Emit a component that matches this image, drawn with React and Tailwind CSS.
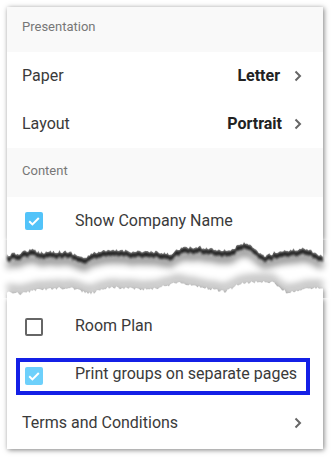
import React from "react";

const FONT = { fontFamily: "Roboto, 'Liberation Sans', sans-serif" };

function rng(seed) {
  let s = seed;
  return () => {
    s = (s * 16807) % 2147483647;
    return (s - 1) / 2147483646;
  };
}

function jag(base, seed, amp) {
  const r = rng(seed);
  const pts = [];
  for (let x = 7; x <= 323; x += 1.5) {
    let i = 0;
    while (i < base.length - 2 && base[i + 1][0] < x) i++;
    const [x0, y0] = base[i];
    const [x1, y1] = base[i + 1];
    let t = (x - x0) / (x1 - x0);
    t = Math.max(0, Math.min(1, t));
    const y = y0 + (y1 - y0) * t + (r() - 0.5) * amp;
    pts.push([x, +y.toFixed(2)]);
  }
  pts[pts.length - 1][0] = 323;
  return pts;
}

const topBase = [
  [7, 15], [20, 13], [27, 10], [33, 10], [40, 12], [55, 11], [70, 12], [85, 18], [95, 12],
  [120, 10], [135, 11], [155, 12], [170, 14], [180, 8], [200, 7], [215, 9], [230, 10],
  [246, 2], [255, 10], [265, 16], [275, 12], [290, 10], [305, 8], [315, 12], [323, 17],
];
const botBase = [
  [7, 52], [20, 54], [40, 50], [70, 48], [90, 54], [110, 47], [150, 50], [177, 43], [200, 47],
  [225, 52], [240, 44], [260, 42], [273, 43], [287, 53], [300, 50], [315, 48], [323, 49],
];

const topPts = jag(topBase, 12345, 3.4);
const botPts = jag(botBase, 98765, 3);

const line = (pts) => pts.map((p) => `${p[0]},${p[1]}`).join(" L");

const topShape = `M7,-20 L${line(topPts)} L323,-20 Z`;
const topStrip = (h) =>
  `M${line(topPts)} L${line([...topPts].reverse().map((p) => [p[0], p[1] + h]))} Z`;
const botShape = `M7,80 L${line(botPts)} L323,80 Z`;
const botStrip = (h) =>
  `M${line(botPts)} L${line([...botPts].reverse().map((p) => [p[0], p[1] - h]))} Z`;

function Torn() {
  return (
    <svg width="331" height="58" viewBox="0 0 331 58" className="block relative">
      <defs>
        <filter id="pshadow" x="-10%" y="-100%" width="120%" height="300%">
          <feGaussianBlur in="SourceAlpha" stdDeviation="2.5" result="blur" />
          <feOffset in="blur" dx="1" dy="1" result="off" />
          <feComponentTransfer in="off" result="soft">
            <feFuncA type="linear" slope="0.5" />
          </feComponentTransfer>
          <feMerge>
            <feMergeNode in="soft" />
            <feMergeNode in="SourceGraphic" />
          </feMerge>
        </filter>
        <filter id="b1" x="-5%" y="-100%" width="110%" height="300%">
          <feGaussianBlur stdDeviation="0.9" />
        </filter>
        <filter id="b2" x="-5%" y="-100%" width="110%" height="300%">
          <feGaussianBlur stdDeviation="3.5" />
        </filter>
      </defs>
      <rect x="0" y="0" width="331" height="58" fill="#fff" />
      <path d={topStrip(8)} fill="#000" opacity="0.45" filter="url(#b2)" transform="translate(0,5)" />
      <path d={topStrip(5)} fill="#2c2c2c" opacity="1" filter="url(#b1)" transform="translate(0,1)" />
      <path d={botStrip(7)} fill="#000" opacity="0.28" filter="url(#b2)" transform="translate(0,-1)" />
      <path d={topShape} fill="#fff" filter="url(#pshadow)" />
      <path d={botShape} fill="#fff" filter="url(#pshadow)" />
    </svg>
  );
}

function Chevron() {
  return (
    <svg width="8" height="12" viewBox="0 0 8 12" className="shrink-0">
      <polyline points="1.5,1.5 6,6 1.5,10.5" fill="none" stroke="#666" strokeWidth="2" />
    </svg>
  );
}

function Check({ checked, light }) {
  if (!checked) {
    return <span className="block w-[18px] h-[18px] rounded-[2px] border-2 border-[#666] shrink-0" />;
  }
  return (
    <span
      className={
        "flex w-[18px] h-[18px] rounded-[2px] items-center justify-center shrink-0 " +
        (light ? "bg-[#6dd0fb]" : "bg-[#52c3f9]")
      }
    >
      <svg width="18" height="18" viewBox="0 0 18 18">
        <polyline points="4.2,9.3 7.4,12.4 13.8,6" fill="none" stroke="#fff" strokeWidth="2" />
      </svg>
    </span>
  );
}

const PANEL_SHADOW = "shadow-[1px_1px_5px_rgba(0,0,0,0.5)]";

export default function App() {
  return (
    <div className="w-[331px] h-[458px] bg-white overflow-hidden pt-[7px]" style={FONT}>
      <div className={"ml-[7px] w-[316px] h-[233px] bg-white overflow-hidden " + PANEL_SHADOW}>
        <div className="h-[45px] bg-[#f9f9f9] flex items-center pl-[15px] pb-[6px] text-[13px] text-[#777]">
          Presentation
        </div>
        <div className="h-[48px] flex items-center pl-[15px] pr-[21px] text-[16px] text-[#3a3a3a]">
          <span className="flex-1">Paper</span>
          <span className="font-bold text-[#222] mr-[14px]">Letter</span>
          <Chevron />
        </div>
        <div className="h-[48px] flex items-center pl-[15px] pr-[21px] text-[16px] text-[#3a3a3a]">
          <span className="flex-1">Layout</span>
          <span className="font-bold text-[#222] mr-[12px]">Portrait</span>
          <Chevron />
        </div>
        <div className="h-[49px] bg-[#f9f9f9] flex items-center pl-[15px] pb-[3px] text-[13px] text-[#777]">
          Content
        </div>
        <div className="h-[48px] flex items-center pl-[18px] text-[16px] text-[#3a3a3a]">
          <Check checked />
          <span className="ml-[32px] -mt-[1px]">Show Company Name</span>
        </div>
      </div>

      <Torn />

      <div className={"ml-[7px] w-[316px] bg-white pt-[5px] pb-[2px] " + PANEL_SHADOW}>
        <div className="h-[48px] flex items-center pl-[18px] text-[16px] text-[#3a3a3a]">
          <Check checked={false} />
          <span className="ml-[32px] -mt-[2px]">Room Plan</span>
        </div>
        <div className="relative h-[48px] flex items-center pl-[18px] pt-[2px] text-[16px] text-[#3a3a3a]">
          <Check checked light />
          <span className="ml-[32px] -mt-[4px]">Print groups on separate pages</span>
          <span className="absolute left-[9px] top-[7px] w-[294px] h-[37px] border-[4px] border-[#1420e6] pointer-events-none" />
        </div>
        <div className="h-[48px] flex items-center pl-[15px] pr-[21px] text-[16px] text-[#3a3a3a]">
          <span className="flex-1 -mt-[1px]">Terms and Conditions</span>
          <Chevron />
        </div>
      </div>
    </div>
  );
}
